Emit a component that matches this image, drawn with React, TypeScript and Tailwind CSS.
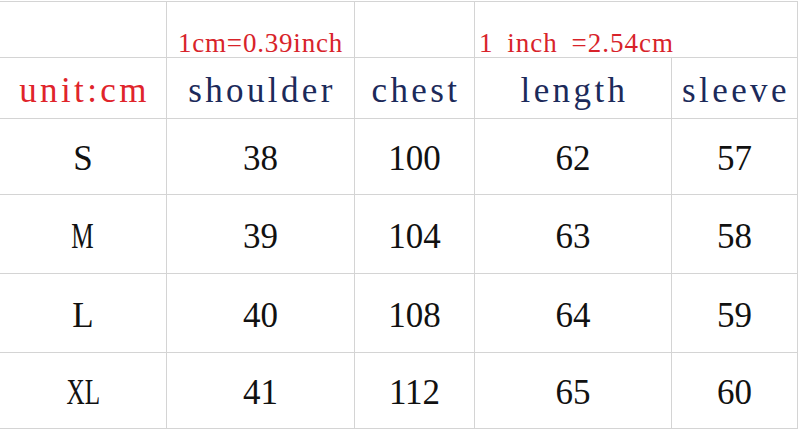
import React from 'react';

const serif = "font-['Liberation_Serif','Times_New_Roman',serif]";

const cols = ['w-[167px]', 'w-[188px]', 'w-[120px]', 'w-[197px]', 'w-[126px]'];

const headers = ['shoulder', 'chest', 'length', 'sleeve'];

const rows = [
    { size: 'S', narrow: false, values: [38, 100, 62, 57], h: 'h-[76px]' },
    { size: 'M', narrow: true, values: [39, 104, 63, 58], h: 'h-[79px]' },
    { size: 'L', narrow: false, values: [40, 108, 64, 59], h: 'h-[79px]' },
    { size: 'XL', narrow: true, values: [41, 112, 65, 60], h: 'h-[76px]' },
];

export default function App() {
    return (
        <div className={`w-[800px] h-[430px] bg-white overflow-hidden pt-px ${serif}`}>
            <div className="w-[798px] border-t border-[#d4d4d4]">
                {/* Conversion notes */}
                <div className="flex h-[56px]">
                    <div className={`${cols[0]} border-r border-b border-[#d4d4d4]`} />
                    <div className={`${cols[1]} border-r border-b border-[#d4d4d4] flex items-end justify-center`}>
                        <span className="text-[27px] leading-[27px] tracking-[0.8px] text-[#d8232a] whitespace-nowrap">1cm=0.39inch</span>
                    </div>
                    <div className={`${cols[2]} border-r border-b border-[#d4d4d4]`} />
                    <div className={`${cols[3]} border-b border-[#d4d4d4] flex items-end pl-[4px] relative z-10`}>
                        <span className="text-[27px] leading-[27px] tracking-[1px] [word-spacing:6px] text-[#d8232a] whitespace-nowrap">1 inch =2.54cm</span>
                    </div>
                    <div className={`${cols[4]} border-r border-b border-[#d4d4d4]`} />
                </div>

                {/* Header */}
                <div className="flex h-[61px]">
                    <div className={`${cols[0]} border-r border-b border-[#d4d4d4] flex items-center justify-center pt-[5px]`}>
                        <span className="text-[35px] leading-[35px] tracking-[3.4px] -mr-[3px] text-[#e0242b]">unit:cm</span>
                    </div>
                    {headers.map((t, i) => (
                        <div key={t} className={`${cols[i + 1]} border-r border-b border-[#d4d4d4] flex items-center justify-center pt-[5px]`}>
                            <span className="text-[35px] leading-[35px] tracking-[3.4px] -mr-[3px] text-[#1c2a5a]">{t}</span>
                        </div>
                    ))}
                </div>

                {/* Sizes */}
                {rows.map((r) => (
                    <div key={r.size} className={`flex ${r.h}`}>
                        <div className={`${cols[0]} border-r border-b border-[#d4d4d4] flex items-center justify-center pt-[4px]`}>
                            <span className={`inline-block text-[35px] leading-[35px] text-[#111] ${r.narrow ? 'scale-x-[0.72]' : ''}`}>{r.size}</span>
                        </div>
                        {r.values.map((v, i) => (
                            <div key={i} className={`${cols[i + 1]} border-r border-b border-[#d4d4d4] flex items-center justify-center pt-[4px]`}>
                                <span className="text-[35px] leading-[35px] text-[#111]">{v}</span>
                            </div>
                        ))}
                    </div>
                ))}
            </div>
        </div>
    );
}
